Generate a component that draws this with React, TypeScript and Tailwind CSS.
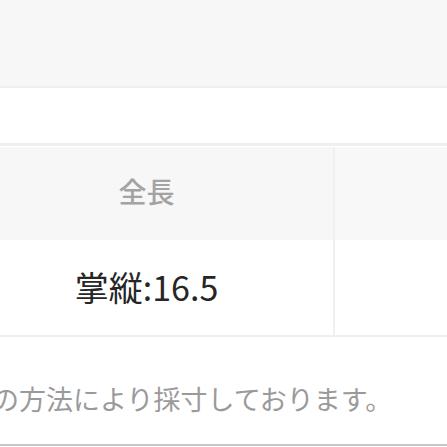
export default function App() {
  const font = { fontFamily: '"Noto Sans CJK JP", "Noto Sans", sans-serif' };
  return (
    <div className="w-[447px] h-[447px] overflow-hidden bg-white" style={font}>
      <div className="h-[86px] bg-[#f7f7f7]" />
      <div className="h-[2px] bg-[#eeeeee]" />
      <div className="h-[55px] bg-white" />
      <div className="h-[3px] bg-[#efefef]" />
      <div className="h-[1px] bg-white" />
      <div className="flex h-[93px] bg-[#f7f7f7]">
        <div className="ml-[-40px] w-[373px] shrink-0 flex items-center justify-center text-[28px] leading-none font-medium text-[#a3a3a3] pb-[6px]">
          全長
        </div>
        <div className="w-[2px] bg-[#f0f0f0]" />
        <div className="flex-1 bg-[#f8f8f8]" />
      </div>
      <div className="flex h-[95px] bg-white">
        <div className="ml-[-40px] w-[373px] shrink-0 flex items-center justify-center text-[34px] leading-none text-[#262626] pb-[2px]">
          掌縦:16.5
        </div>
        <div className="w-[2px] bg-[#f0f0f0]" />
        <div className="flex-1" />
      </div>
      <div className="h-[2px] bg-[#efefef]" />
      <div className="h-[107px] bg-white pt-[48px]">
        <div className="ml-[-89px] whitespace-nowrap text-[27px] leading-[27px] text-[#9a9a9a]">
          ※上記の方法により採寸しております。
        </div>
      </div>
      <div className="h-[2px] bg-[#c8c8c8]" />
    </div>
  );
}
